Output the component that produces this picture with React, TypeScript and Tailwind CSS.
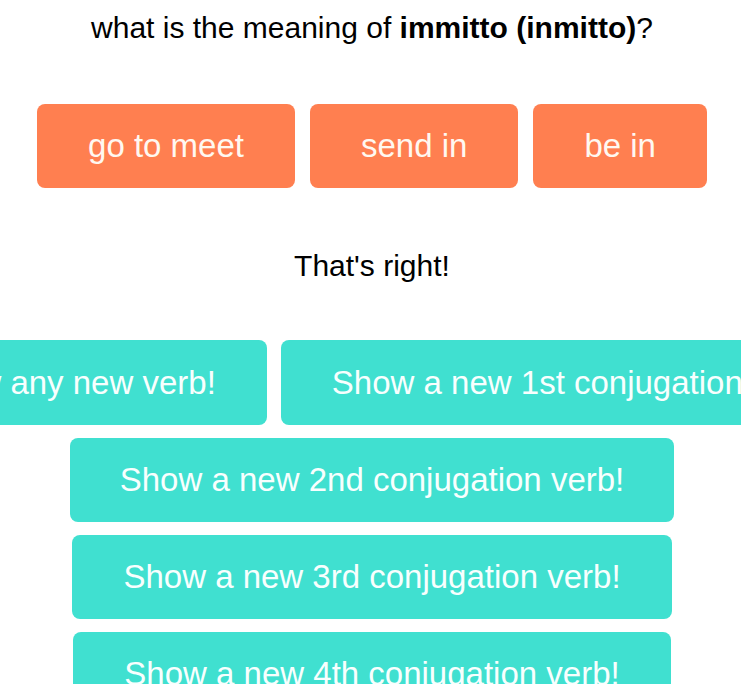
import React from "react";

const orange = ["go to meet", "send in", "be in"];

export default function App() {
  return (
    <div className="w-full min-h-[684px] overflow-hidden bg-white pl-[3px] text-center text-black" style={{ fontFamily: '"Liberation Sans", Arial, sans-serif' }}>
      <div className="pt-[10px] text-[30px] leading-[36px]">
        what is the meaning of <b>immitto (inmitto)</b>?
      </div>
      <div className="mt-[58px] flex justify-center gap-[15px]">
        {orange.map((t) => (
          <button key={t} className="h-[84px] rounded-[8px] bg-[#ff7f50] px-[51px] text-[33px] text-[#fff8f0]">
            {t}
          </button>
        ))}
      </div>
      <div className="mt-[60px] text-[30px] leading-[36px]">That's right!</div>
      <div className="mt-[56px] flex flex-col items-center gap-[13px]">
        <div className="flex w-full justify-center gap-[14px]">
          <button className="h-[85px] shrink-0 whitespace-nowrap rounded-[8px] bg-[#40e0d0] px-[51px] text-[33px] text-[#f8fffe]">Show any new verb!</button>
          <button className="h-[85px] shrink-0 whitespace-nowrap rounded-[8px] bg-[#40e0d0] px-[51px] text-[33px] text-[#f8fffe]">Show a new 1st conjugation verb!</button>
        </div>
        <button className="h-[84px] whitespace-nowrap rounded-[8px] bg-[#40e0d0] px-[50px] text-[33px] text-[#f8fffe]">Show a new 2nd conjugation verb!</button>
        <button className="h-[84px] whitespace-nowrap rounded-[8px] bg-[#40e0d0] px-[51px] text-[33px] text-[#f8fffe]">Show a new 3rd conjugation verb!</button>
        <button className="h-[84px] whitespace-nowrap rounded-[8px] bg-[#40e0d0] px-[51px] text-[33px] text-[#f8fffe]">Show a new 4th conjugation verb!</button>
      </div>
    </div>
  );
}
